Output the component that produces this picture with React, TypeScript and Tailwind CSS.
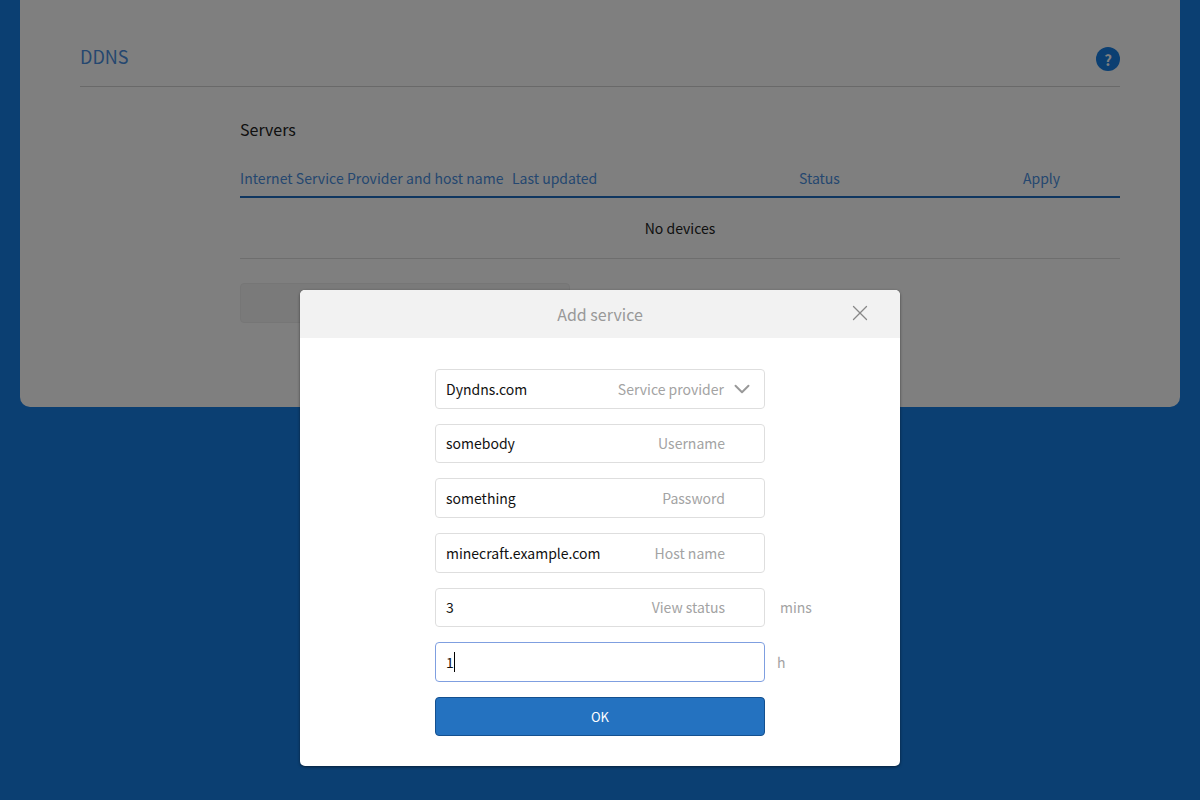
import React from 'react';
import { ChevronDown, X } from 'lucide-react';

const fields = [
  { value: 'somebody', label: 'Username', height: 'h-[39px]' },
  { value: 'something', label: 'Password', height: 'h-[40px]' },
  { value: 'minecraft.example.com', label: 'Host name', height: 'h-[40px]' },
];

export default function App() {
  return (
    <div className="relative h-[800px] w-[1200px] overflow-hidden bg-[#167ee4] font-['Noto_Sans_CJK_SC','Noto_Sans',sans-serif] text-[14px]">
      {/* Page behind the dialog */}
      <div className="mx-5 h-[407px] rounded-b-[10px] bg-white px-[60px]">
        <div className="flex h-[87px] items-end justify-between border-b border-[#d2d2d2] pb-[15px]">
          <h1 className="mb-[2px] text-[18px] leading-[26px] text-[#4a8fe0]">DDNS</h1>
          <div className="flex h-6 w-6 items-center justify-center rounded-full bg-[#167ee4] text-[15px] leading-none font-bold text-white">?</div>
        </div>
        <div className="pl-[160px]">
          <h2 className="mt-[30px] text-[16px] leading-6 text-[#222]">Servers</h2>
          <div className="mt-[26px] grid h-[31px] grid-cols-[272px_287px_224px_1fr] border-b-2 border-[#1f6cc0] text-[14px] text-[#4a8fe0]">
            <span className="leading-[22px] tracking-[0.04px] whitespace-nowrap">Internet Service Provider and host name</span>
            <span className="leading-[22px]">Last updated</span>
            <span className="leading-[22px]">Status</span>
            <span className="leading-[22px]">Apply</span>
          </div>
          <div className="flex h-[61px] items-center justify-center border-b border-[#dcdcdc] text-[#222]">No devices</div>
          <div className="mt-[24px] h-10 w-[330px] rounded border border-[#ececec] bg-[#f5f5f5]"></div>
        </div>
      </div>

      <div className="absolute inset-0 bg-black/50"></div>

      {/* Add service dialog */}
      <div className="absolute top-[290px] left-[300px] h-[476px] w-[600px] overflow-hidden rounded-[5px] bg-white shadow-[0_1px_3px_rgba(0,0,0,0.5)]">
        <div className="relative flex h-[48px] items-center justify-center bg-[#f2f2f2] text-[16px] text-[#999]">
          Add service
          <X size={26} strokeWidth={1.2} className="absolute top-[10px] right-[27px] text-[#888]" />
        </div>
        <div className="mx-auto mt-[31px] flex w-[330px] flex-col gap-[15px]">
          <div className="flex h-10 items-center rounded border border-[#dedede] pr-[13px] pl-[10px]">
            <span className="text-[#111]">Dyndns.com</span>
            <span className="ml-auto text-[#a3a3a3]">Service provider</span>
            <ChevronDown size={26} strokeWidth={1.8} className="ml-[5px] -mr-[4px] text-[#999]" />
          </div>
          {fields.map(f => (
            <div key={f.label} className={`flex items-center justify-between rounded border border-[#dedede] pr-[39px] pl-[10px] ${f.height}`}>
              <span className="text-[#111]">{f.value}</span>
              <span className="text-[#a3a3a3]">{f.label}</span>
            </div>
          ))}
          <div className="relative flex h-[39px] items-center justify-between rounded border border-[#dedede] pr-[39px] pl-[10px]">
            <span className="text-[#111]">3</span>
            <span className="text-[#a3a3a3]">View status</span>
            <span className="absolute left-[344px] text-[14px] text-[#a3a3a3]">mins</span>
          </div>
          <div className="relative flex h-10 items-center rounded border border-[#7f9fe0] pl-[10px]">
            <span className="text-[#111]">1</span>
            <span className="h-[20px] w-px bg-black"></span>
            <span className="absolute left-[341px] text-[14px] text-[#a3a3a3]">h</span>
          </div>
          <button className="flex h-[39px] items-center justify-center rounded border border-[#14508f] bg-[#2472c0] text-[13px] text-white">OK</button>
        </div>
      </div>
    </div>
  );
}
